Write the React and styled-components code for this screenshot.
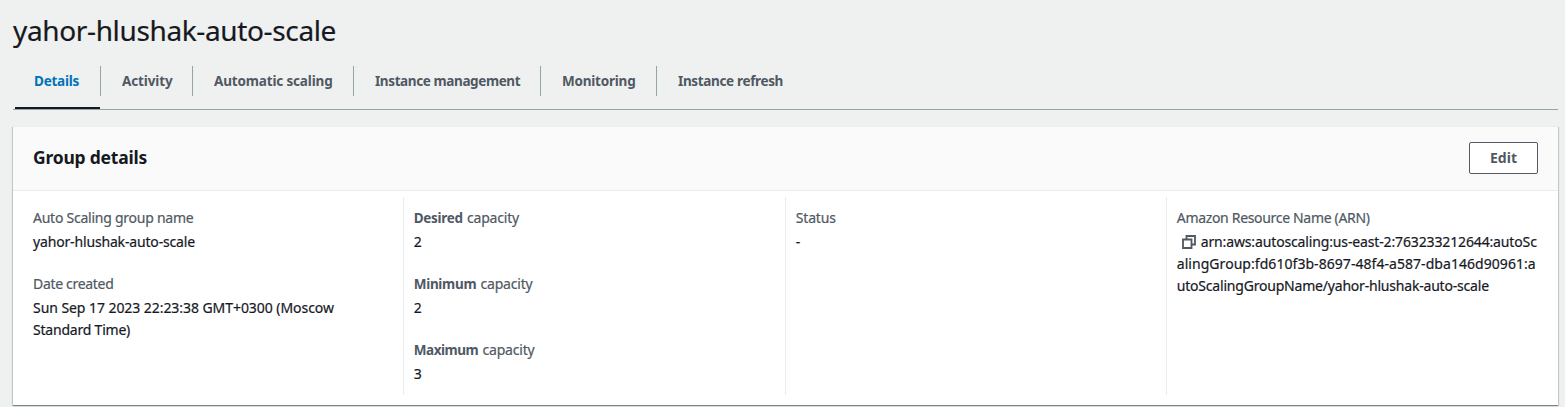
import React from "react";
import styled, { createGlobalStyle } from "styled-components";

const GlobalStyle = createGlobalStyle`
  * { box-sizing: border-box; }
  body {
    margin: 0;
    background: #eff1f0;
    color: #16191f;
    font: 400 14px/22px "Noto Sans", "Open Sans", sans-serif;
    -webkit-text-stroke: 0.2px currentColor;
    overflow: hidden;
  }
`;

const Page = styled.main`
  height: 407px;
  padding: 12px 7px 0 13px;
  overflow: hidden;
`;

const Title = styled.h1`
  margin: 0;
  font-size: 28px;
  line-height: 36px;
  font-weight: 400;
  letter-spacing: -0.36px;
`;

const TabList = styled.nav`
  display: flex;
  height: 44px;
  margin-top: 18px;
  border-bottom: 1px solid #95a5a6;
`;

const Tab = styled.a`
  position: relative;
  flex: none;
  width: ${(p) => p.$width}px;
  height: 30px;
  padding-left: 21px;
  border-right: ${(p) => (p.$last ? "0" : "1px solid #95a5a6")};
  color: ${(p) => (p.$active ? "#0073bb" : "#4f5963")};
  font-size: 13.5px;
  line-height: 30px;
  font-weight: 700;
  -webkit-text-stroke: 0;
  letter-spacing: ${(p) => p.$track}px;
  white-space: nowrap;

  &::after {
    content: "";
    display: ${(p) => (p.$active ? "block" : "none")};
    position: absolute;
    left: 2px;
    right: 0;
    top: 41px;
    height: 2px;
    background: #16191f;
  }
`;

const Card = styled.section`
  margin-top: 16px;
  height: 279px;
  background: #fff;
  border-top: 1px solid #eaeded;
  box-shadow: 0 1px 1px 0 rgba(0, 28, 36, 0.3), 1px 1px 1px 0 rgba(0, 28, 36, 0.15),
    -1px 1px 1px 0 rgba(0, 28, 36, 0.15);
`;

const CardHeader = styled.header`
  display: flex;
  align-items: center;
  justify-content: space-between;
  height: 64px;
  padding: 0 20px 2px;
  background: #fafafa;
  border-bottom: 1px solid #eaeded;
`;

const CardTitle = styled.h2`
  margin: 0;
  padding-bottom: 2px;
  font-size: 17.5px;
  line-height: 22px;
  font-weight: 700;
  -webkit-text-stroke: 0;
  letter-spacing: -0.22px;
`;

const Button = styled.button`
  width: 69px;
  height: 32px;
  padding: 0;
  border: 1px solid #545b64;
  border-radius: 2px;
  background: #fff;
  color: #4f5963;
  font: inherit;
  font-weight: 700;
  -webkit-text-stroke: 0;
`;

const Columns = styled.div`
  display: grid;
  grid-template-columns: 390px 382px 381px 1fr;
  height: 198px;
  margin-top: 6px;
`;

const Column = styled.div`
  display: flex;
  flex-direction: column;
  gap: 20px;
  padding: 10px 0 0 ${(p) => (p.$first ? 20 : 9.75)}px;
  border-left: ${(p) => (p.$first ? "0" : "1px solid #eaeded")};
`;

const Field = styled.div`
  display: flex;
  flex-direction: column;
  gap: 2px;
`;

const Label = styled.div`
  color: #4f5963;
`;

const Strong = styled.b`
  margin-right: 0.8px;
  font-size: 13.5px;
  -webkit-text-stroke: 0;
  letter-spacing: ${(p) => p.$track}px;
`;

const Line = styled.span`
  display: block;
  letter-spacing: ${(p) => p.$track || 0}px;
  white-space: nowrap;
`;

const CopyIcon = styled.svg`
  width: 14px;
  height: 14px;
  margin: 0 5px 0 5px;
  vertical-align: -2px;
`;

const tabs = [
  { name: "Details", width: 88, track: -0.25, active: true },
  { name: "Activity", width: 92, track: -0.12 },
  { name: "Automatic scaling", width: 161, track: -0.16 },
  { name: "Instance management", width: 187, track: -0.39 },
  { name: "Monitoring", width: 116, track: -0.22 },
  { name: "Instance refresh", width: 148, track: -0.34 },
];

const capacities = [
  { kind: "Desired", value: 2, track: -0.3 },
  { kind: "Minimum", value: 2, track: -0.31 },
  { kind: "Maximum", value: 3, track: -0.47 },
];

export default function App() {
  return (
    <Page>
      <GlobalStyle />
      <Title>yahor-hlushak-auto-scale</Title>
      <TabList>
        {tabs.map((t, i) => (
          <Tab
            key={t.name}
            $width={t.width}
            $track={t.track}
            $active={t.active}
            $last={i === tabs.length - 1}
          >
            {t.name}
          </Tab>
        ))}
      </TabList>
      <Card>
        <CardHeader>
          <CardTitle>Group details</CardTitle>
          <Button>Edit</Button>
        </CardHeader>
        <Columns>
          <Column $first>
            <Field>
              <Label><Line $track={-0.25}>Auto Scaling group name</Line></Label>
              <Line $track={-0.16}>yahor-hlushak-auto-scale</Line>
            </Field>
            <Field>
              <Label><Line $track={-0.31}>Date created</Line></Label>
              <div>
                <Line $track={-0.06}>Sun Sep 17 2023 22:23:38 GMT+0300 (Moscow</Line>
                <Line $track={-0.21}>Standard Time)</Line>
              </div>
            </Field>
          </Column>
          <Column>
            {capacities.map((c) => (
              <Field key={c.kind}>
                <Label>
                  <Line $track={-0.2}>
                    <Strong $track={c.track}>{c.kind}</Strong> capacity
                  </Line>
                </Label>
                <Line>{c.value}</Line>
              </Field>
            ))}
          </Column>
          <Column>
            <Field>
              <Label><Line $track={-0.17}>Status</Line></Label>
              <Line>-</Line>
            </Field>
          </Column>
          <Column>
            <Field>
              <Label><Line $track={-0.32}>Amazon Resource Name (ARN)</Line></Label>
              <div>
                <Line $track={-0.14}>
                  <CopyIcon viewBox="0 0 14 14" fill="none" stroke="#4f5963" strokeWidth="1.8">
                    <path d="M1 4.5h8.5V13H1z" />
                    <path d="M4.5 4.5V1H13v8.5H9.5" />
                  </CopyIcon>
                  arn:aws:autoscaling:us-east-2:763233212644:autoSc
                </Line>
                <Line $track={0.05}>alingGroup:fd610f3b-8697-48f4-a587-dba146d90961:a</Line>
                <Line $track={-0.2}>utoScalingGroupName/yahor-hlushak-auto-scale</Line>
              </div>
            </Field>
          </Column>
        </Columns>
      </Card>
    </Page>
  );
}
